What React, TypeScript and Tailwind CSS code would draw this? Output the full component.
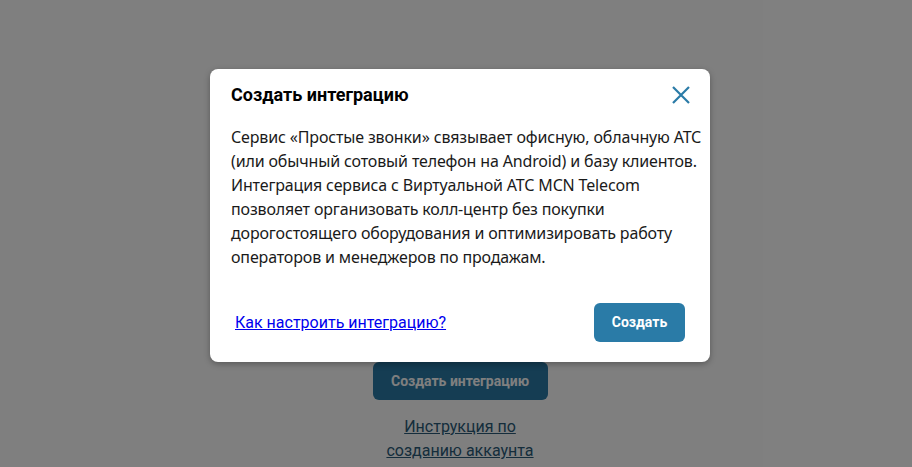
import React from "react";

export default function App() {
  return (
    <div className="relative h-[467px] w-full overflow-hidden bg-white" style={{ fontFamily: "Roboto, 'Liberation Sans', sans-serif" }}>
      {/* underlying page */}
      <div className="flex flex-col items-center pt-[362px] pl-2">
        <button className="h-[38px] w-[175px] rounded-[6px] bg-[#2a7ba7] text-[14px] font-bold text-white">
          Создать интеграцию
        </button>
        <a href="#" className="mt-[15px] w-[175px] text-center text-[16px] leading-[24px] text-[#2a5a78] underline">
          Инструкция по созданию аккаунта
        </a>
      </div>

      {/* overlay */}
      <div className="absolute inset-0 bg-black/50">
        <div className="flex justify-center pt-[69px] pl-2">
          <div className="w-[500px] rounded-[8px] bg-white shadow-[0_2px_6px_rgba(0,0,0,0.3)]">
            <div className="flex items-center justify-between pl-[21px] pr-[17px] pt-[14px]">
              <h2 className="text-[18px] font-bold leading-[24px] text-black">Создать интеграцию</h2>
              <button className="flex h-[24px] w-[24px] items-center justify-center text-[#2a7ba7]">
                <svg width="20" height="20" viewBox="0 0 20 20" fill="none" stroke="currentColor" strokeWidth="2.2" strokeLinecap="butt">
                  <path d="M2 2 L18 18 M18 2 L2 18" />
                </svg>
              </button>
            </div>
            <p
              className="mt-[18px] whitespace-nowrap pl-[21px] pr-[20px] text-[16px] leading-[24px] tracking-[-0.15px] text-[#1a1a1a]"
              style={{ fontFamily: "'Noto Sans', 'Open Sans', sans-serif" }}
            >
              Сервис «Простые звонки» связывает офисную, облачную АТС
              <br />
              (или обычный сотовый телефон на Android) и базу клиентов.
              <br />
              Интеграция сервиса с Виртуальной АТС MCN Telecom
              <br />
              позволяет организовать колл-центр без покупки
              <br />
              дорогостоящего оборудования и оптимизировать работу
              <br />
              операторов и менеджеров по продажам.
            </p>
            <div className="mt-[34px] flex items-center justify-between pb-[20px] pl-[25px] pr-[25px]">
              <a href="#" className="text-[16px] leading-[20px] text-[#0000ee] underline">
                Как настроить интеграцию?
              </a>
              <button className="h-[39px] w-[91px] rounded-[6px] bg-[#2a7ba7] text-[14px] font-bold text-white">
                Создать
              </button>
            </div>
          </div>
        </div>
      </div>
    </div>
  );
}
